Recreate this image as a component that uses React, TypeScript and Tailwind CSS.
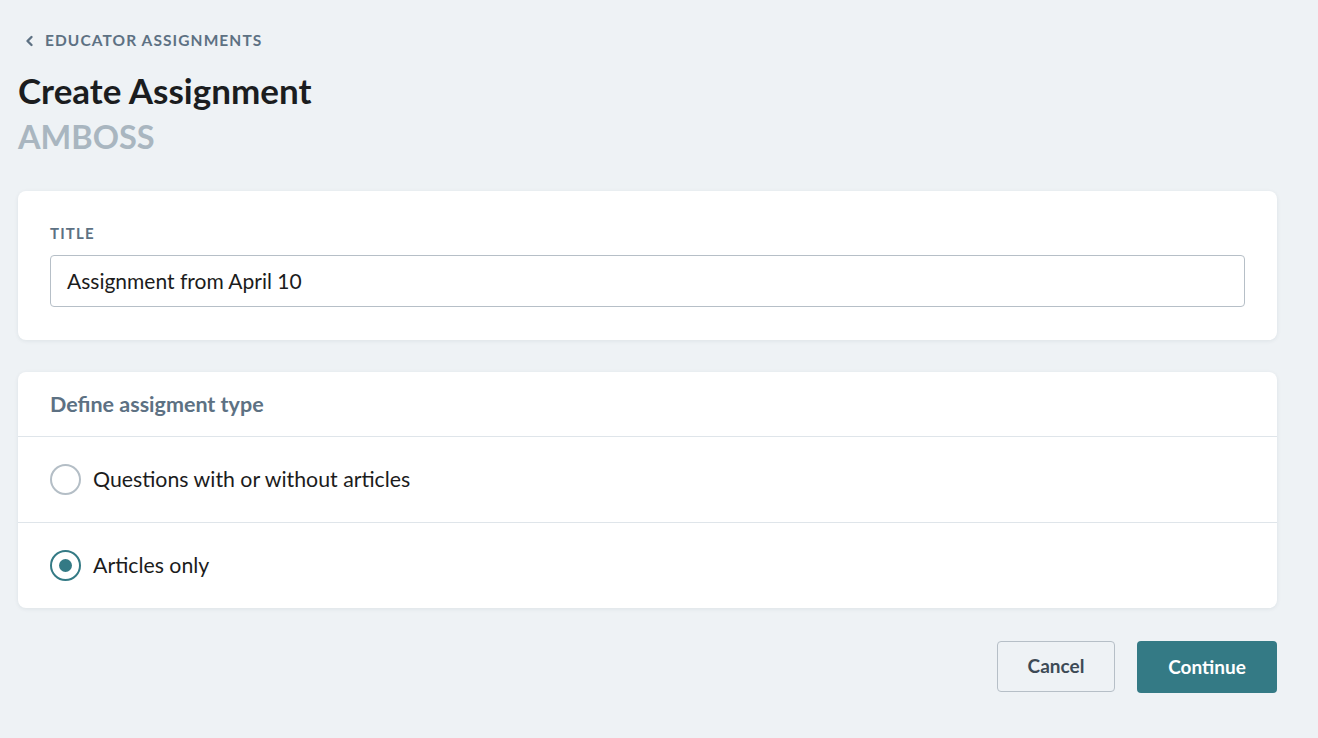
export default function App() {
  return (
    <div className="min-h-[738px] bg-[#eef2f5] pl-[18px] pr-[41px] pt-[30px] font-['Lato',sans-serif] text-[#1c1c1c]">
      {/* Back link */}
      <a className="flex h-[22px] items-center gap-[10px] pl-[6px] text-[15.5px] font-bold tracking-[0.07em] text-[#5d7183] uppercase">
        <svg width="11" height="12" viewBox="0 0 11 12" fill="none">
          <path d="M7.5 2 3.5 6l4 4" stroke="#5d7183" strokeWidth="2.4" strokeLinecap="round" strokeLinejoin="round" />
        </svg>
        Educator assignments
      </a>

      {/* Heading */}
      <h1 className="mt-[18px] text-[35px] leading-[40px] font-bold text-[#1b1d1f]">Create Assignment</h1>
      <div className="mt-[8px] text-[32.5px] leading-[38px] font-bold text-[#a9b6c0]">AMBOSS</div>

      {/* Title card */}
      <div className="mt-[35px] rounded-[8px] bg-white px-[32px] pt-[34px] pb-[33px] shadow-[0_1px_4px_rgba(30,50,70,0.08)]">
        <label className="block text-[15px] leading-[16px] font-bold tracking-[0.08em] text-[#5d7183] uppercase">Title</label>
        <div className="mt-[14px] flex h-[52px] items-center rounded-[4px] border border-[#b6bfc7] px-[16px] text-[21px] text-[#1c1c1c]">
          Assignment from April 10
        </div>
      </div>

      {/* Type card */}
      <div className="mt-[32px] rounded-[8px] bg-white shadow-[0_1px_4px_rgba(30,50,70,0.08)]">
        <div className="flex h-[65px] items-center border-b border-[#dfe5ea] px-[32px] text-[21.5px] font-bold text-[#5d7183]">
          Define assigment type
        </div>
        <div className="flex h-[86px] items-center gap-[12px] border-b border-[#dfe5ea] px-[32px]">
          <span className="h-[31px] w-[31px] rounded-full border-2 border-[#b4bec6]" />
          <span className="text-[21.3px]">Questions with or without articles</span>
        </div>
        <div className="flex h-[85px] items-center gap-[12px] px-[32px]">
          <span className="flex h-[31px] w-[31px] items-center justify-center rounded-full border-2 border-[#347a85]">
            <span className="h-[13px] w-[13px] rounded-full bg-[#347a85]" />
          </span>
          <span className="text-[21.3px]">Articles only</span>
        </div>
      </div>

      {/* Actions */}
      <div className="mt-[33px] flex justify-end gap-[22px]">
        <button className="h-[51px] w-[118px] rounded-[4px] border border-[#b6bfc7] bg-[#eef2f5] text-[19px] font-bold text-[#3d4a55]">
          Cancel
        </button>
        <button className="h-[52px] w-[140px] rounded-[4px] bg-[#347a85] text-[19px] font-bold text-white">
          Continue
        </button>
      </div>
    </div>
  )
}
